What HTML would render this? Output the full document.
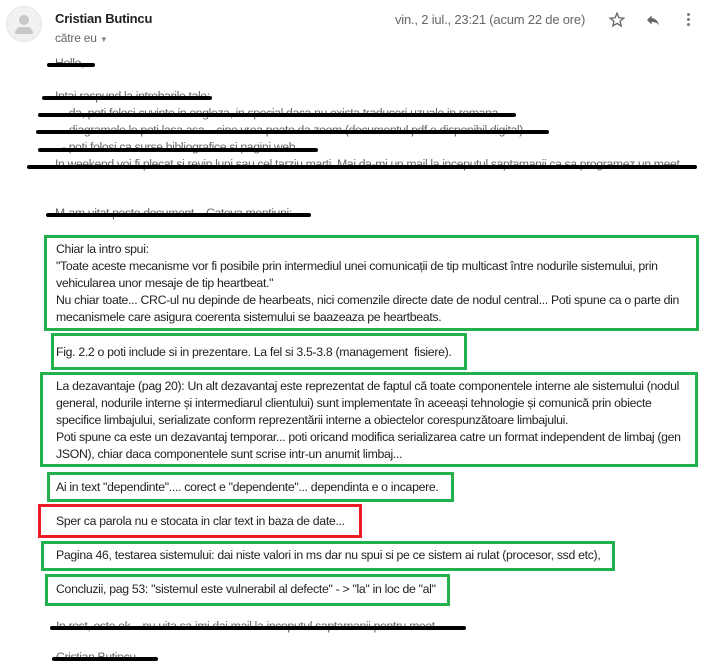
<!DOCTYPE html>
<html><head><meta charset="utf-8"><style>
body{margin:0;width:704px;height:665px;background:#fff;position:relative;overflow:hidden;font-family:"Liberation Sans",Arial,sans-serif;color:#222}
.a{position:absolute;white-space:nowrap}
.t{font-size:12.3px;letter-spacing:-0.32px;line-height:17px}
.box{position:absolute;border:3px solid #22b14c;box-sizing:border-box}
.red{border-color:#ed1c24}
.k{position:absolute;height:4px;background:#000;border-radius:3px}
.g{color:#666;font-size:12.2px;letter-spacing:-0.35px}
</style></head><body>
<div class="a" style="left:6px;top:6px;width:36px;height:36px;border-radius:50%;background:#f1f1f1;border:1px solid #e6e6e6;box-sizing:border-box"></div>
<div class="a" style="left:19px;top:15px;width:10px;height:10px;border-radius:50%;background:#c8c8c8"></div>
<div class="a" style="left:15px;top:27px;width:18px;height:7px;border-radius:8px 8px 1px 1px;background:#c8c8c8"></div>
<div class="a" style="left:55px;top:11px;font-size:13px;font-weight:bold;color:#222;letter-spacing:-0.2px">Cristian Butincu</div>
<div class="a" style="left:55px;top:31px;font-size:12px;color:#666;letter-spacing:-0.2px">către eu <span style="font-size:8px;color:#888">▼</span></div>
<div class="a" style="left:395px;top:12px;font-size:13px;color:#666;letter-spacing:-0.2px">vin., 2 iul., 23:21 (acum 22 de ore)</div>
<svg class="a" style="left:608px;top:11px" width="18" height="18" viewBox="0 0 24 24"><path d="M12 3l2.6 6 6.4.5-4.9 4.2 1.5 6.3L12 16.6 6.4 20l1.5-6.3L3 9.5 9.4 9z" fill="none" stroke="#666" stroke-width="1.8"/></svg>
<svg class="a" style="left:644px;top:12px" width="18" height="16" viewBox="0 0 24 24"><path d="M10 9V5l-7 7 7 7v-4.1c5 0 8.5 1.6 11 5.1-1-5-4-10-11-11z" fill="#666"/></svg>
<div class="a" style="left:687px;top:13px;width:3px;height:3px;background:#777;border-radius:50%;box-shadow:0 5px 0 #777,0 10px 0 #777"></div>

<div class="a g" style="left:55px;top:56px">Hello,</div><div class="k" style="left:47px;top:63px;width:48px"></div>
<div class="a g" style="left:55px;top:89px">Intai raspund la intrebarile tale:</div><div class="k" style="left:42px;top:96px;width:170px"></div>
<div class="a g" style="left:62px;top:106px">- da, poti folosi cuvinte in engleza, in special daca nu exista traduceri uzuale in romana</div><div class="k" style="left:38px;top:113px;width:478px"></div>
<div class="a g" style="left:62px;top:123px">- diagramele le poti lasa asa... cine vrea poate da zoom (documentul pdf e disponibil digital)</div><div class="k" style="left:36px;top:130px;width:513px"></div>
<div class="a g" style="left:62px;top:140px">- poti folosi ca surse bibliografice si pagini web</div><div class="k" style="left:38px;top:148px;width:280px"></div>
<div class="a g" style="left:55px;top:157px">In weekend voi fi plecat si revin luni sau cel tarziu marti. Mai da-mi un mail la inceputul saptamanii ca sa programez un meet.</div><div class="k" style="left:27px;top:165px;width:670px"></div>
<div class="a g" style="left:55px;top:206px">M-am uitat peste document... Cateva mentiuni:</div><div class="k" style="left:46px;top:213px;width:265px"></div>

<div class="box" style="left:44px;top:235px;width:655px;height:96px"></div>
<div class="a t" style="left:56px;top:241px">Chiar la intro spui:<br>"Toate aceste mecanisme vor fi posibile prin intermediul unei comunicații de tip multicast între nodurile sistemului, prin<br>vehicularea unor mesaje de tip heartbeat."<br>Nu chiar toate... CRC-ul nu depinde de hearbeats, nici comenzile directe date de nodul central... Poti spune ca o parte din<br>mecanismele care asigura coerenta sistemului se baazeaza pe heartbeats.</div>

<div class="box" style="left:51px;top:333px;width:416px;height:37px"></div>
<div class="a t" style="left:56px;top:344px">Fig. 2.2 o poti include si in prezentare. La fel si 3.5-3.8 (management&nbsp; fisiere).</div>

<div class="box" style="left:40px;top:372px;width:658px;height:95px"></div>
<div class="a t" style="left:56px;top:378px">La dezavantaje (pag 20): Un alt dezavantaj este reprezentat de faptul că toate componentele interne ale sistemului (nodul<br>general, nodurile interne și intermediarul clientului) sunt implementate în aceeași tehnologie și comunică prin obiecte<br>specifice limbajului, serializate conform reprezentării interne a obiectelor corespunzătoare limbajului.<br>Poti spune ca este un dezavantaj temporar... poti oricand modifica serializarea catre un format independent de limbaj (gen<br>JSON), chiar daca componentele sunt scrise intr-un anumit limbaj...</div>

<div class="box" style="left:47px;top:472px;width:407px;height:30px"></div>
<div class="a t" style="left:56px;top:479px">Ai in text "dependinte".... corect e "dependente"... dependinta e o incapere.</div>

<div class="box red" style="left:38px;top:504px;width:324px;height:34px"></div>
<div class="a t" style="left:56px;top:513px">Sper ca parola nu e stocata in clar text in baza de date...</div>

<div class="box" style="left:41px;top:541px;width:574px;height:30px"></div>
<div class="a t" style="left:56px;top:547px">Pagina 46, testarea sistemului: dai niste valori in ms dar nu spui si pe ce sistem ai rulat (procesor, ssd etc),</div>

<div class="box" style="left:45px;top:574px;width:405px;height:32px"></div>
<div class="a t" style="left:56px;top:581px">Concluzii, pag 53: "sistemul este vulnerabil al defecte" - &gt; "la" in loc de "al"</div>

<div class="a g" style="left:56px;top:619px">In rest, este ok... nu uita sa imi dai mail la inceputul saptamanii pentru meet.</div><div class="k" style="left:50px;top:626px;width:416px"></div>
<div class="a g" style="left:56px;top:650px">Cristian Butincu</div><div class="k" style="left:52px;top:657px;width:106px"></div>
</body></html>
